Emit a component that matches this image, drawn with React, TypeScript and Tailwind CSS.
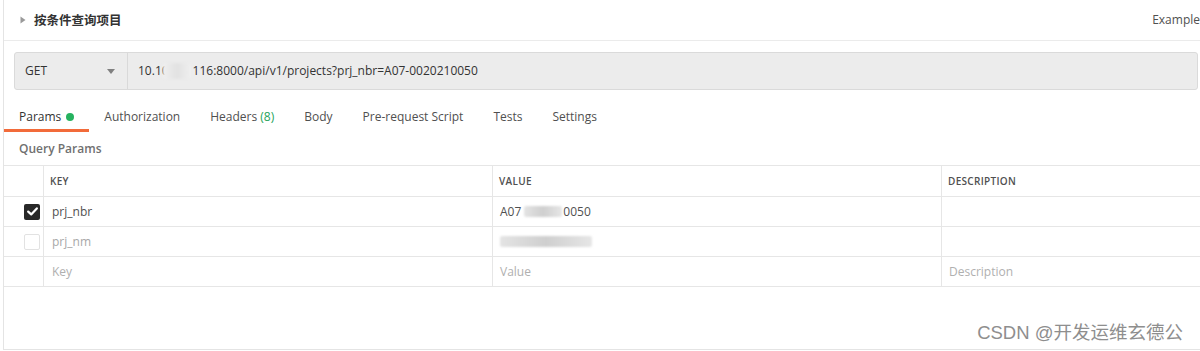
import React from "react";

const Blur = ({ w, h = 12, className = "" }: { w: number; h?: number; className?: string }) => (
  <span
    className={`inline-block align-middle rounded-[2px] bg-gradient-to-r from-[#e4e4e4] via-[#cfcfcf] to-[#e6e6e6] blur-[1px] ${className}`}
    style={{ width: w, height: h }}
  />
);

export default function App() {
  const tabs: { label: React.ReactNode; active?: boolean }[] = [
    {
      label: (
        <span className="flex items-center gap-[5px]">
          Params <span className="inline-block w-[8px] h-[8px] rounded-full bg-[#26b25f]" />
        </span>
      ),
      active: true,
    },
    { label: "Authorization" },
    {
      label: (
        <span>
          Headers <span className="text-[#26a35b]">(8)</span>
        </span>
      ),
    },
    { label: "Body" },
    { label: "Pre-request Script" },
    { label: "Tests" },
    { label: "Settings" },
  ];

  return (
    <div className="relative w-[1200px] h-[351px] overflow-hidden bg-white font-['Open_Sans','Noto_Sans_CJK_SC',sans-serif] text-[#505050]">
      <div className="ml-[3px] h-[350px] border-l border-b border-[#e4e4e4] flex flex-col">
        {/* header */}
        <div className="h-[41px] shrink-0 border-b border-[#ebebeb] flex items-center pl-[16px]">
          <svg width="6" height="8" viewBox="0 0 6 8" className="mr-[8px]">
            <path d="M0.5 0.5 L5.5 4 L0.5 7.5 Z" fill="#9a9a9a" />
          </svg>
          <span className="text-[12.5px] font-semibold text-[#333] font-['Noto_Sans_CJK_SC',sans-serif]">
            按条件查询项目
          </span>
          <span className="ml-auto text-[12px] text-[#505050] whitespace-nowrap">Example</span>
        </div>

        {/* url bar */}
        <div className="pl-[10px] pr-[2px] pt-[11px]">
          <div className="h-[38px] flex rounded-[3px] border border-[#dadada] bg-[#ececec]">
            <div className="w-[113px] shrink-0 flex items-center pl-[10px] pr-[10px] border-r border-[#d9d9d9]">
              <span className="text-[12px] text-[#333]">GET</span>
              <svg width="8" height="5" viewBox="0 0 8 5" className="ml-auto mr-[2px]">
                <path d="M0 0 L8 0 L4 5 Z" fill="#808080" />
              </svg>
            </div>
            <div className="flex items-center pl-[10px] text-[12px] text-[#333] whitespace-nowrap">
              <span>10.10</span>
              <Blur w={28} h={16} className="ml-[-6px] mr-[2px] from-[#f0f0f0] via-[#e2e2e2] to-[#efefef]" />
              <span>116:8000/api/v1/projects?prj_nbr=A07-0020210050</span>
            </div>
          </div>
        </div>

        {/* tabs */}
        <div className="mt-[11px] flex h-[31px] text-[12px] text-[#505050]">
          {tabs.map((t, i) => (
            <div
              key={i}
              className={`px-[15px] pt-[4px] flex items-center border-b-[3px] ${
                t.active ? "border-[#f26b3a] text-[#333]" : "border-transparent"
              }`}
            >
              {t.label}
            </div>
          ))}
        </div>

        <div className="h-[33px] flex items-center pl-[15px] text-[12px] font-semibold text-[#707070]">
          Query Params
        </div>

        {/* table */}
        <div className="grid grid-cols-[39px_449px_449px_1fr] border-t border-[#e6e6e6] text-[12px]">
          {/* header */}
          <div className="h-[31px] border-b border-[#e6e6e6]" />
          <div className="h-[31px] border-b border-l border-[#e6e6e6] flex items-center pl-[6px] text-[10px] font-semibold tracking-[0.3px] text-[#505050]">KEY</div>
          <div className="h-[31px] border-b border-l border-[#e6e6e6] flex items-center pl-[6px] text-[10px] font-semibold tracking-[0.3px] text-[#505050]">VALUE</div>
          <div className="h-[31px] border-b border-l border-[#e6e6e6] flex items-center pl-[6px] text-[10px] font-semibold tracking-[0.3px] text-[#505050]">DESCRIPTION</div>

          {/* row 1 */}
          <div className="h-[30px] border-b border-[#e6e6e6] flex items-center pl-[20px]">
            <div className="w-[16px] h-[16px] rounded-[2px] bg-[#282828] flex items-center justify-center">
              <svg width="11" height="9" viewBox="0 0 11 9">
                <path d="M1.2 4.6 L4.2 7.4 L9.8 1.4" stroke="#fff" strokeWidth="2.2" fill="none" strokeLinecap="round" strokeLinejoin="round" />
              </svg>
            </div>
          </div>
          <div className="h-[30px] border-b border-l border-[#e6e6e6] flex items-center pl-[8px] text-[#505050]">prj_nbr</div>
          <div className="h-[30px] border-b border-l border-[#e6e6e6] flex items-center pl-[7px] text-[#505050]">
            <span>A07</span>
            <Blur w={38} h={11} className="ml-[3px] mr-[1px]" />
            <span>0050</span>
          </div>
          <div className="h-[30px] border-b border-l border-[#e6e6e6]" />

          {/* row 2 */}
          <div className="h-[30px] border-b border-[#e6e6e6] flex items-center pl-[20px]">
            <div className="w-[16px] h-[16px] rounded-[2px] border border-[#e2e2e2] bg-white" />
          </div>
          <div className="h-[30px] border-b border-l border-[#e6e6e6] flex items-center pl-[8px] text-[#a8a8a8]">prj_nm</div>
          <div className="h-[30px] border-b border-l border-[#e6e6e6] flex items-center pl-[7px]">
            <Blur w={92} h={11} />
          </div>
          <div className="h-[30px] border-b border-l border-[#e6e6e6]" />

          {/* row 3 */}
          <div className="h-[30px] border-b border-[#e6e6e6]" />
          <div className="h-[30px] border-b border-l border-[#e6e6e6] flex items-center pl-[8px] text-[#b0b0b0]">Key</div>
          <div className="h-[30px] border-b border-l border-[#e6e6e6] flex items-center pl-[7px] text-[#b0b0b0]">Value</div>
          <div className="h-[30px] border-b border-l border-[#e6e6e6] flex items-center pl-[7px] text-[#b0b0b0]">Description</div>
        </div>
      </div>

      {/* watermark */}
      <div className="absolute right-[17px] top-[320px] text-[18.5px] leading-[26px] text-[#8e8e8e] whitespace-nowrap font-['Liberation_Sans','Noto_Sans_CJK_SC',sans-serif] [text-shadow:0_0_1px_#ffffff]">
        CSDN @开发运维玄德公
      </div>
    </div>
  );
}
